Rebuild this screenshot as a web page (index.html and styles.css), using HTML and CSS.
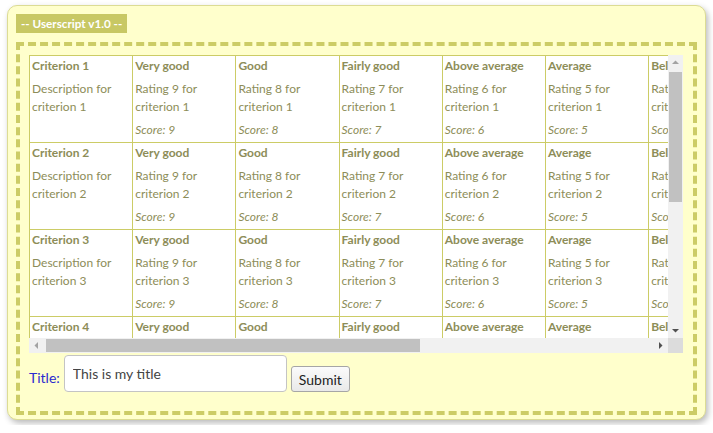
FILE: index.html
```html
<!DOCTYPE html>
<html>
<head>
<meta charset="utf-8">
<link rel="stylesheet" href="styles.css">
</head>
<body>
<div class="panel">
  <div class="head"><span class="badge">-- Userscript v1.0 --</span></div>
  <div class="frame">
    <div class="scroller">
      <div class="viewport">
        <table class="grid">
          <tbody>
            <tr>
              <td><div class="t">Criterion 1</div><div class="d">Description for criterion 1</div></td>
              <td><div class="t">Very good</div><div class="d">Rating 9 for criterion 1</div><div class="s">Score: 9</div></td>
              <td><div class="t">Good</div><div class="d">Rating 8 for criterion 1</div><div class="s">Score: 8</div></td>
              <td><div class="t">Fairly good</div><div class="d">Rating 7 for criterion 1</div><div class="s">Score: 7</div></td>
              <td><div class="t">Above average</div><div class="d">Rating 6 for criterion 1</div><div class="s">Score: 6</div></td>
              <td><div class="t">Average</div><div class="d">Rating 5 for criterion 1</div><div class="s">Score: 5</div></td>
              <td><div class="t">Below average</div><div class="d">Rating 4 for criterion 1</div><div class="s">Score: 4</div></td>
              <td><div class="t">Fairly poor</div><div class="d">Rating 3 for criterion 1</div><div class="s">Score: 3</div></td>
              <td><div class="t">Poor</div><div class="d">Rating 2 for criterion 1</div><div class="s">Score: 2</div></td>
              <td><div class="t">Very poor</div><div class="d">Rating 1 for criterion 1</div><div class="s">Score: 1</div></td>
            </tr>
            <tr>
              <td><div class="t">Criterion 2</div><div class="d">Description for criterion 2</div></td>
              <td><div class="t">Very good</div><div class="d">Rating 9 for criterion 2</div><div class="s">Score: 9</div></td>
              <td><div class="t">Good</div><div class="d">Rating 8 for criterion 2</div><div class="s">Score: 8</div></td>
              <td><div class="t">Fairly good</div><div class="d">Rating 7 for criterion 2</div><div class="s">Score: 7</div></td>
              <td><div class="t">Above average</div><div class="d">Rating 6 for criterion 2</div><div class="s">Score: 6</div></td>
              <td><div class="t">Average</div><div class="d">Rating 5 for criterion 2</div><div class="s">Score: 5</div></td>
              <td><div class="t">Below average</div><div class="d">Rating 4 for criterion 2</div><div class="s">Score: 4</div></td>
              <td><div class="t">Fairly poor</div><div class="d">Rating 3 for criterion 2</div><div class="s">Score: 3</div></td>
              <td><div class="t">Poor</div><div class="d">Rating 2 for criterion 2</div><div class="s">Score: 2</div></td>
              <td><div class="t">Very poor</div><div class="d">Rating 1 for criterion 2</div><div class="s">Score: 1</div></td>
            </tr>
            <tr>
              <td><div class="t">Criterion 3</div><div class="d">Description for criterion 3</div></td>
              <td><div class="t">Very good</div><div class="d">Rating 9 for criterion 3</div><div class="s">Score: 9</div></td>
              <td><div class="t">Good</div><div class="d">Rating 8 for criterion 3</div><div class="s">Score: 8</div></td>
              <td><div class="t">Fairly good</div><div class="d">Rating 7 for criterion 3</div><div class="s">Score: 7</div></td>
              <td><div class="t">Above average</div><div class="d">Rating 6 for criterion 3</div><div class="s">Score: 6</div></td>
              <td><div class="t">Average</div><div class="d">Rating 5 for criterion 3</div><div class="s">Score: 5</div></td>
              <td><div class="t">Below average</div><div class="d">Rating 4 for criterion 3</div><div class="s">Score: 4</div></td>
              <td><div class="t">Fairly poor</div><div class="d">Rating 3 for criterion 3</div><div class="s">Score: 3</div></td>
              <td><div class="t">Poor</div><div class="d">Rating 2 for criterion 3</div><div class="s">Score: 2</div></td>
              <td><div class="t">Very poor</div><div class="d">Rating 1 for criterion 3</div><div class="s">Score: 1</div></td>
            </tr>
            <tr>
              <td><div class="t">Criterion 4</div><div class="d">Description for criterion 4</div></td>
              <td><div class="t">Very good</div><div class="d">Rating 9 for criterion 4</div><div class="s">Score: 9</div></td>
              <td><div class="t">Good</div><div class="d">Rating 8 for criterion 4</div><div class="s">Score: 8</div></td>
              <td><div class="t">Fairly good</div><div class="d">Rating 7 for criterion 4</div><div class="s">Score: 7</div></td>
              <td><div class="t">Above average</div><div class="d">Rating 6 for criterion 4</div><div class="s">Score: 6</div></td>
              <td><div class="t">Average</div><div class="d">Rating 5 for criterion 4</div><div class="s">Score: 5</div></td>
              <td><div class="t">Below average</div><div class="d">Rating 4 for criterion 4</div><div class="s">Score: 4</div></td>
              <td><div class="t">Fairly poor</div><div class="d">Rating 3 for criterion 4</div><div class="s">Score: 3</div></td>
              <td><div class="t">Poor</div><div class="d">Rating 2 for criterion 4</div><div class="s">Score: 2</div></td>
              <td><div class="t">Very poor</div><div class="d">Rating 1 for criterion 4</div><div class="s">Score: 1</div></td>
            </tr>
          </tbody>
        </table>
      </div>
      <div class="vbar">
        <div class="sbtn"><svg width="15" height="15" viewBox="0 0 15 15"><path class="arr off" d="M4 9 L7.5 5.5 L11 9 Z"/></svg></div>
        <div class="vtrack"><div class="vthumb"></div></div>
        <div class="sbtn"><svg width="15" height="15" viewBox="0 0 15 15"><path class="arr" d="M4 6 L11 6 L7.5 9.5 Z"/></svg></div>
      </div>
      <div class="hbar">
        <div class="sbtn"><svg width="15" height="15" viewBox="0 0 15 15"><path class="arr off" d="M9 4 L9 11 L5.5 7.5 Z"/></svg></div>
        <div class="htrack"><div class="hthumb"></div></div>
        <div class="sbtn"><svg width="15" height="15" viewBox="0 0 15 15"><path class="arr" d="M6 4 L9.5 7.5 L6 11 Z"/></svg></div>
      </div>
      <div class="corner"></div>
    </div>
    <form class="form-row">
      <label class="lbl" for="title">Title:</label>
      <input class="inp" id="title" type="text" value="This is my title">
      <button class="btn" type="button">Submit</button>
    </form>
  </div>
</div>
</body>
</html>
```
FILE: styles.css
```css
html, body {
  margin: 0;
  padding: 0;
  background: #ffffff;
}
body {
  padding: 5px 7px;
  font-family: Lato, "Liberation Sans", sans-serif;
}
.panel {
  box-sizing: border-box;
  width: 699px;
  border: 1px solid #dcdc94;
  border-radius: 10px;
  background: #ffffcc;
  padding: 8px 8px 4px 8px;
  box-shadow: 2px 3px 6px rgba(0, 0, 0, 0.28);
}
.head {
  height: 19px;
}
.badge {
  display: inline-block;
  background: #c8c864;
  color: #ffffff;
  font-size: 11.7px;
  font-weight: 700;
  line-height: 19px;
  padding: 0 5px;
  vertical-align: top;
}
.frame {
  margin-top: 9px;
  border: 4px dashed #cccc66;
  padding: 9px 9px 19px 9px;
}
.scroller {
  display: grid;
  grid-template-columns: 639px 15px;
  grid-template-rows: 283px 15px;
}
.viewport {
  overflow: hidden;
}
.grid {
  border-collapse: collapse;
  table-layout: fixed;
  width: 1033px;
}
.grid td {
  border: 1px solid #cccc66;
  background: #ffffff;
  vertical-align: top;
  padding: 1px 2px 3px 2px;
  color: #8d8d58;
  font-size: 12px;
  line-height: 18px;
}
.t {
  font-weight: 700;
}
.d {
  margin-top: 5px;
}
.s {
  margin-top: 5px;
  font-style: italic;
}
.vbar {
  display: flex;
  flex-direction: column;
  background: #f1f1f1;
}
.hbar {
  display: flex;
  background: #f1f1f1;
}
.sbtn {
  width: 15px;
  height: 15px;
  flex: none;
}
.sbtn svg {
  display: block;
}
.arr {
  fill: #505050;
}
.arr.off {
  fill: #a3a3a3;
}
.vtrack {
  flex: 1;
  padding: 2px 1px 0 1px;
}
.vthumb {
  height: 130px;
  background: #c1c1c1;
}
.htrack {
  flex: 1;
  padding: 1px 0 1px 2px;
}
.hthumb {
  width: 374px;
  height: 13px;
  background: #c1c1c1;
}
.corner {
  background: #dcdcdc;
}
.form-row {
  display: flex;
  align-items: flex-end;
  gap: 4px;
  margin: 2px 0 0 0;
}
.lbl {
  color: #2b2bd0;
  font-size: 14px;
  line-height: 17px;
  padding-bottom: 6px;
}
.inp {
  box-sizing: border-box;
  width: 223px;
  height: 37px;
  border: 1px solid #c4c4c4;
  border-radius: 4px;
  padding: 0 8px;
  font-family: Lato, "Liberation Sans", sans-serif;
  font-size: 14px;
  color: #444444;
  background: #ffffff;
  margin: 0;
}
.btn {
  box-sizing: border-box;
  width: 59px;
  height: 26px;
  margin: 0;
  border: 1px solid #a6a6a6;
  border-radius: 3px;
  background: linear-gradient(#fbfbfb, #e9e9e9);
  font-family: Lato, "Liberation Sans", sans-serif;
  font-size: 14px;
  color: #222222;
  padding: 0;
}
```
